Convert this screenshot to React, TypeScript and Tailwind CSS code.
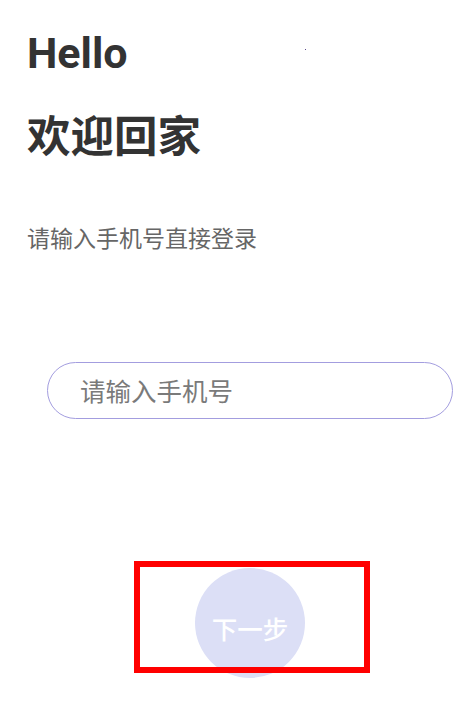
import React from "react";

export default function App() {
  return (
    <div
      className="relative w-[468px] h-[721px] bg-white overflow-hidden"
      style={{ fontFamily: '"Noto Sans CJK SC", "Noto Sans", sans-serif' }}
    >
      <div className="pl-[27px] pt-[32px]">
        <div
          className="text-[43px] font-bold leading-none text-[#333333]"
          style={{ fontFamily: 'Roboto, "Noto Sans CJK SC", sans-serif' }}
        >
          Hello
        </div>
        <div className="mt-[37px] text-[43.5px] font-bold leading-none text-[#333333]">欢迎回家</div>
        <div className="mt-[70px] text-[23px] leading-none text-[#666666]">请输入手机号直接登录</div>
      </div>
      <div className="mt-[113px] ml-[47px] w-[406px] h-[57px] rounded-full border-[1.5px] border-[#a39ddf] flex items-center pl-[32px]">
        <span className="text-[25.5px] leading-none text-[#7a7a7a]">请输入手机号</span>
      </div>
      <div className="mt-[149px] ml-[195px] w-[110px] h-[110px] rounded-full bg-[#dcdff6] flex items-center justify-center pt-[11px]">
        <span className="text-[25.5px] font-medium text-white leading-none">下一步</span>
      </div>
      <div className="absolute left-[134px] top-[561px] w-[236px] h-[112px] border-[6px] border-[#ff0000]" />
      <div className="absolute left-[305px] top-[49px] w-[1px] h-[1px] bg-[#5a4a8a]" />
    </div>
  );
}
